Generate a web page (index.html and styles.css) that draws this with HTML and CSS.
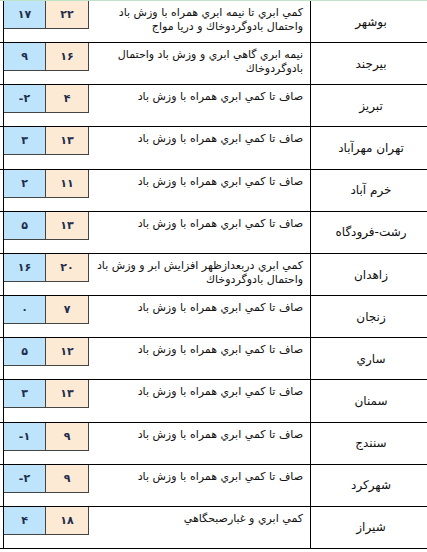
FILE: index.html
```html
<!DOCTYPE html>
<html lang="fa">
<head>
<meta charset="utf-8">
<link rel="stylesheet" href="styles.css">
</head>
<body>
<div class="table">
  <div class="row"><div class="lead"></div><div class="nums"><div class="min">۱۷</div><div class="max">۲۲</div></div><div class="desc">كمي ابري تا نيمه ابري همراه با وزش باد<br>واحتمال بادوگردوخاك و دريا مواج</div><div class="city">بوشهر</div></div>
  <div class="row"><div class="lead"></div><div class="nums"><div class="min">۹</div><div class="max">۱۶</div></div><div class="desc">نيمه ابري گاهي ابري و وزش باد واحتمال<br>بادوگردوخاك</div><div class="city">بيرجند</div></div>
  <div class="row"><div class="lead"></div><div class="nums"><div class="min">-۲</div><div class="max">۴</div></div><div class="desc">صاف تا كمي ابري همراه با وزش باد</div><div class="city">تبريز</div></div>
  <div class="row"><div class="lead"></div><div class="nums"><div class="min">۳</div><div class="max">۱۳</div></div><div class="desc">صاف تا كمي ابري همراه با وزش باد</div><div class="city">تهران مهرآباد</div></div>
  <div class="row"><div class="lead"></div><div class="nums"><div class="min">۲</div><div class="max">۱۱</div></div><div class="desc">صاف تا كمي ابري همراه با وزش باد</div><div class="city">خرم آباد</div></div>
  <div class="row"><div class="lead"></div><div class="nums"><div class="min">۵</div><div class="max">۱۳</div></div><div class="desc">صاف تا كمي ابري همراه با وزش باد</div><div class="city">رشت-فرودگاه</div></div>
  <div class="row"><div class="lead"></div><div class="nums"><div class="min">۱۶</div><div class="max">۲۰</div></div><div class="desc">كمي ابري دربعدازظهر افزايش ابر و وزش باد<br>واحتمال بادوگردوخاك</div><div class="city">زاهدان</div></div>
  <div class="row"><div class="lead"></div><div class="nums"><div class="min">۰</div><div class="max">۷</div></div><div class="desc">صاف تا كمي ابري همراه با وزش باد</div><div class="city">زنجان</div></div>
  <div class="row"><div class="lead"></div><div class="nums"><div class="min">۵</div><div class="max">۱۲</div></div><div class="desc">صاف تا كمي ابري همراه با وزش باد</div><div class="city">ساري</div></div>
  <div class="row"><div class="lead"></div><div class="nums"><div class="min">۳</div><div class="max">۱۳</div></div><div class="desc">صاف تا كمي ابري همراه با وزش باد</div><div class="city">سمنان</div></div>
  <div class="row"><div class="lead"></div><div class="nums"><div class="min">-۱</div><div class="max">۹</div></div><div class="desc">صاف تا كمي ابري همراه با وزش باد</div><div class="city">سنندج</div></div>
  <div class="row"><div class="lead"></div><div class="nums"><div class="min">-۲</div><div class="max">۹</div></div><div class="desc">صاف تا كمي ابري همراه با وزش باد</div><div class="city">شهركرد</div></div>
  <div class="row"><div class="lead"></div><div class="nums"><div class="min">۴</div><div class="max">۱۸</div></div><div class="desc">كمي ابري و غبارصبحگاهي</div><div class="city">شيراز</div></div>
</div>
</body>
</html>
```
FILE: styles.css
```css
html, body {
  margin: 0;
  padding: 0;
  background: #fff;
  overflow: hidden;
}
body {
  font-family: "DejaVu Sans", sans-serif;
  color: #111;
  width: 427px;
  height: 552px;
}
.table {
  border-top: 1px solid #bfe3c8;
  width: 431px;
}
.row {
  display: flex;
  height: 42.17px;
  box-sizing: border-box;
  border-bottom: 1px solid #000;
}
.lead {
  width: 3px;
  flex: none;
}
.nums {
  flex: none;
  width: 86px;
  display: flex;
  align-items: flex-start;
  border-left: 1px solid #000;
  box-sizing: border-box;
}
.min, .max {
  height: 28px;
  box-sizing: border-box;
  border-right: 1px solid #444;
  border-bottom: 1px solid #444;
  display: flex;
  align-items: center;
  justify-content: center;
  font-size: 11px;
  font-weight: bold;
  color: #1f2d4d;
  direction: ltr;
}
.min {
  width: 42px;
  background: #bde4fa;
}
.max {
  width: 43px;
  background: #fdead4;
}
.desc {
  flex: none;
  width: 222px;
  box-sizing: border-box;
  border-right: 1px solid #000;
  direction: rtl;
  text-align: right;
  font-size: 11px;
  line-height: 14px;
  padding: 5px 7px 0 2px;
  white-space: nowrap;
  overflow: hidden;
}
.city {
  flex: none;
  width: 120px;
  display: flex;
  align-items: center;
  justify-content: center;
  direction: rtl;
  font-size: 12px;
}
```
